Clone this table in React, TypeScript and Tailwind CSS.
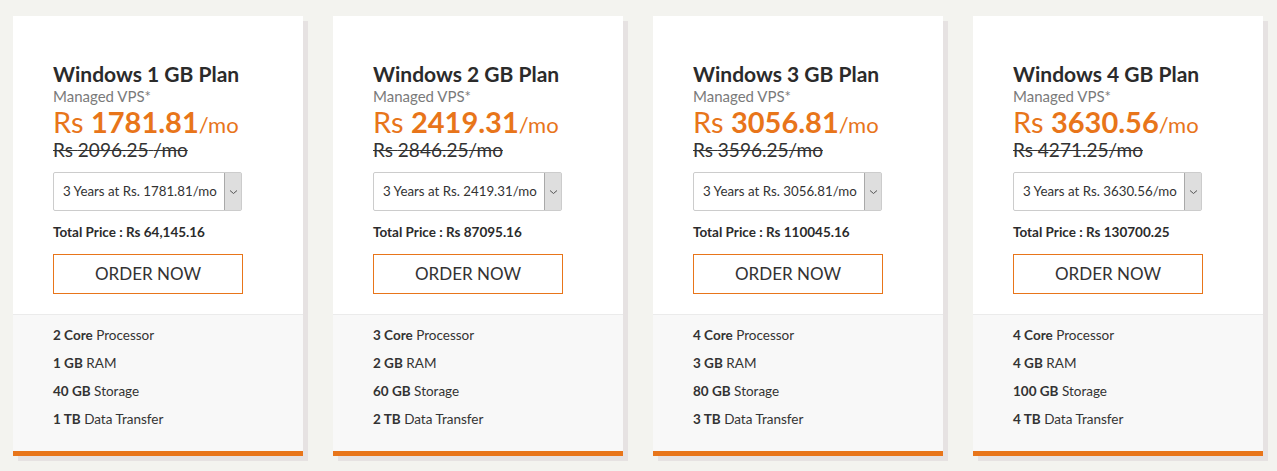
import React from "react";

type Plan = {
  gb: number;
  price: string;
  old: string;
  oldSpace: boolean;
  option: string;
  total: string;
  core: number;
  storage: number;
  tb: number;
};

const plans: Plan[] = [
  { gb: 1, price: "1781.81", old: "2096.25", oldSpace: true, option: "3 Years at Rs. 1781.81/mo", total: "64,145.16", core: 2, storage: 40, tb: 1 },
  { gb: 2, price: "2419.31", old: "2846.25", oldSpace: false, option: "3 Years at Rs. 2419.31/mo", total: "87095.16", core: 3, storage: 60, tb: 2 },
  { gb: 3, price: "3056.81", old: "3596.25", oldSpace: false, option: "3 Years at Rs. 3056.81/mo", total: "110045.16", core: 4, storage: 80, tb: 3 },
  { gb: 4, price: "3630.56", old: "4271.25", oldSpace: false, option: "3 Years at Rs. 3630.56/mo", total: "130700.25", core: 4, storage: 100, tb: 4 },
];

function Card({ p }: { p: Plan }) {
  return (
    <div className="w-[290px] bg-white shadow-[5px_5px_0_#e6e2e2] flex flex-col">
      <div className="pl-[40px] pt-[45px] pb-[20px] border-b border-[#ebebeb]">
        <div className="text-[21px] leading-[26px] font-bold text-[#2b2b2b]">Windows {p.gb} GB Plan</div>
        <div className="text-[15px] leading-[18px] text-[#7a7a7a]">Managed VPS*</div>
        <div className="text-[#e8751a] text-[29px] leading-[28px] h-[28px] mt-[3px] whitespace-nowrap">
          <span>Rs </span>
          <span className="font-bold">{p.price}</span>
          <span className="text-[22px] leading-[22px]">/mo</span>
        </div>
        <div className="mt-[4px] text-[19px] leading-[20px] h-[20px] text-[#333] line-through decoration-1">
          Rs {p.old}{p.oldSpace ? " " : ""}/mo
        </div>
        <div className="mt-[12px] w-[189px] h-[39px] border border-[#cccccc] rounded-[2px] flex items-stretch">
          <div className="flex-1 flex items-center pl-[9px] text-[13.3px] text-[#333] whitespace-nowrap overflow-hidden">{p.option}</div>
          <div className="w-[17px] bg-[#dedede] border-l border-[#a9a9a9] flex items-center justify-center">
            <svg width="9" height="6" viewBox="0 0 9 6" fill="none">
              <path d="M1 1.5 L4.5 4.5 L8 1.5" stroke="#555" strokeWidth="1" />
            </svg>
          </div>
        </div>
        <div className="mt-[13px] text-[13.5px] leading-[16px] font-bold text-[#2b2b2b] whitespace-nowrap">Total Price : Rs {p.total}</div>
        <div className="mt-[14px] w-[190px] h-[40px] border border-[#e8751a] flex items-center justify-center text-[17px] text-[#333]">
          ORDER NOW
        </div>
      </div>
      <div className="bg-[#f8f8f8] pl-[40px] pt-[6px] pb-[18px] text-[13.5px] leading-[28px] text-[#333] flex-1">
        <div><b>{p.core} Core</b> Processor</div>
        <div><b>{p.gb} GB</b> RAM</div>
        <div><b>{p.storage} GB</b> Storage</div>
        <div><b>{p.tb} TB</b> Data Transfer</div>
      </div>
      <div className="h-[5px] bg-[#e8751a]" />
    </div>
  );
}

export default function App() {
  return (
    <div className="w-[1277px] h-[471px] bg-[#f3f3ef] font-['Lato','Liberation_Sans',sans-serif]">
      <div className="flex gap-[30px] pl-[13px] pt-[16px]">
        {plans.map((p) => (
          <Card key={p.gb} p={p} />
        ))}
      </div>
    </div>
  );
}
